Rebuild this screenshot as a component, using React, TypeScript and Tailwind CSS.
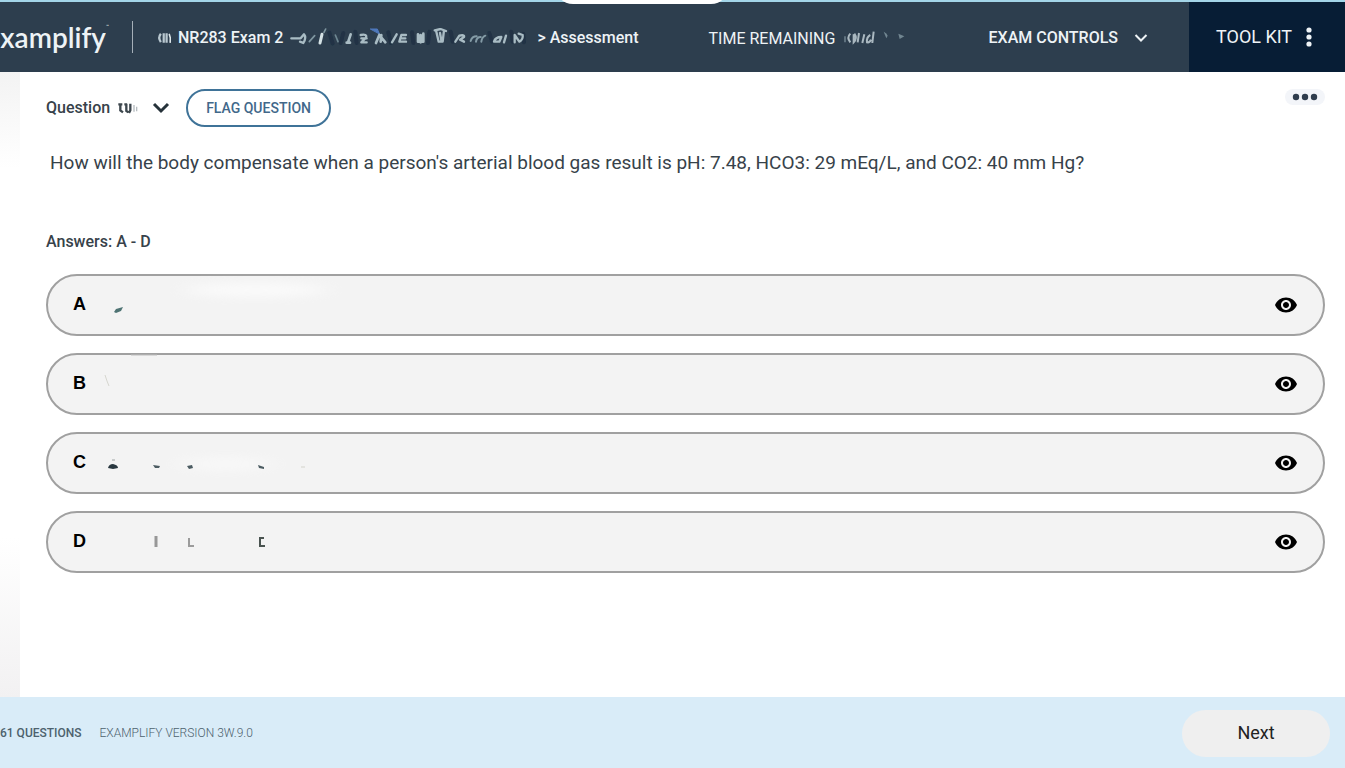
import React from "react";
import { MdVisibility } from "react-icons/md";

function ExamNameSmudge() {
  return (
    <svg
      viewBox="30 81 708 60"
      className="h-5 w-[236px] shrink-0"
      fill="none"
      stroke="#a9bcc4"
      strokeWidth="7"
      strokeLinecap="round"
      strokeLinejoin="round"
      aria-hidden="true"
    >
      <defs>
        <filter id="soften" x="-5%" y="-20%" width="110%" height="140%">
          <feGaussianBlur stdDeviation="1.500" />
        </filter>
      </defs>
      <g filter="url(#soften)">
        <g stroke="#203345" strokeWidth="12">
          <path d="M148 95l10 32M190 96l-8 30M226 92l4 34M325 94l8 32M396 94l4 32M448 92l-4 34M512 92l6 30M628 96l8 26M694 92l4 30M730 98l2 26" />
        </g>
        <path d="M34 112h28l10-12q8 10-2 26l-10-4" />
        <path d="M104 104l-16 18M137 84l-5 10" strokeWidth="5" stroke="#7f96a0" />
        <path d="M126 100l-6 26" stroke="#d5e2e5" strokeWidth="9" />
        <path d="M166 102l8 20" stroke="#6e8792" strokeWidth="5" />
        <path d="M212 100l-8 24M200 125h10" strokeWidth="8" />
        <path d="M242 102q20-4 16 8l-14 14h16M244 112h16" />
        <path d="M272 84l20 0 6 14z" fill="#4f79bd" stroke="#4f79bd" strokeWidth="3" />
        <path d="M288 126l10-24 18 22M304 102l-2 20" strokeWidth="8" />
        <path d="M350 100l-14 24M378 102h-14l-6 20h20M362 112h14" />
        <path d="M414 100v22h16V98M422 102v22" strokeWidth="8" />
        <path d="M468 88l8 34 12 0 4-34M464 88l18-4 16 6M480 96l4 22" strokeWidth="7" />
        <path d="M526 122l12-18q16-4 14 4l-12 8 12 6" />
        <path d="M572 120q4-14 18-14M588 122q2-14 14-14M604 122q2-14 12-18" stroke="#849ba6" strokeWidth="6" />
        <path d="M642 122q4-14 22-14l-6 14h-14M678 104l-6 20" />
        <path d="M704 124v-22l14 20q12-6 10-20l-12-4" />
      </g>
    </svg>
  );
}

function TimeSmudge() {
  return (
    <svg
      viewBox="912 90 192 60"
      className="h-5 w-16 shrink-0"
      fill="none"
      stroke="#aab8c0"
      strokeWidth="6"
      aria-hidden="true"
    >
      <g filter="url(#soften)">
        <path d="M918 112v18" stroke="#5f727f" />
        <path d="M934 104q-12 12 0 26M944 106v24q12-12 2-26M960 102l-4 28" />
        <path d="M976 106l-6 26M994 108q-12 6-10 22 8 2 12-8M1004 98l-4 34" />
        <path d="M1034 98q10 4 12 12l-4 8zM1078 104l18 8-14 8z" fill="#718691" stroke="none" />
      </g>
    </svg>
  );
}

function QuestionSmudge() {
  return (
    <svg
      viewBox="355 300 66 48"
      className="h-4 w-[22px] shrink-0"
      fill="none"
      stroke="#3d474e"
      strokeWidth="7"
      aria-hidden="true"
    >
      <g filter="url(#soften)">
        <path d="M362 311v20l8 6M356 313h12M380 311v22l6 4M392 311v20l-4 8M374 313h8" />
        <path d="M403 315v20M411 320v14" stroke="#b6bcc0" strokeWidth="4" />
      </g>
    </svg>
  );
}

const smudges: Record<string, React.ReactNode> = {
  A: (
    <>
      <ellipse cx="155" cy="-5" rx="70" ry="7" fill="#ffffff" opacity="0.6" filter="url(#glow)" />
      <path d="M13 17l2-3 7-2-2 4-5 2z" fill="#4e7373" />
    </>
  ),
  B: (
    <>
      <path d="M4 1l2 6 2 5" stroke="#d6d6cf" strokeWidth="1" fill="none" />
      <path d="M30 -19h26" stroke="#bdbdbd" strokeWidth="1" />
    </>
  ),
  C: (
    <>
      <ellipse cx="125" cy="11" rx="45" ry="7" fill="#ffffff" opacity="0.4" filter="url(#glow)" />
      <path d="M7 15q1-4 5-4 5 1 5 4l-5 1z" fill="#28373f" />
      <path d="M11 7h3" stroke="#c9cccc" strokeWidth="2" />
      <path d="M52 12l7 1-1 2-4 0zM86 13l5-1 1 3-4 1zM157 12l6 2v2l-5-1z" fill="#4c5c62" />
      <path d="M200 14h4" stroke="#e3e3df" strokeWidth="2" />
    </>
  ),
  D: (
    <>
      <path d="M55 4v11" stroke="#979797" strokeWidth="3" />
      <path d="M88 6v8h5" stroke="#9b9b9b" strokeWidth="2" fill="none" />
      <path d="M163 6h-4v8h5" stroke="#495350" strokeWidth="2" fill="none" />
    </>
  ),
};

function Answer({ letter }: { letter: string }) {
  return (
    <li className="flex h-[62px] items-center rounded-full border-2 border-[#a0a0a0] bg-[#f3f3f3] pr-[25px]">
      <button
        type="button"
        className="flex h-full flex-1 items-center rounded-full pl-[25px] text-left font-['Liberation_Sans',sans-serif] text-lg font-bold text-black"
      >
        <span className="w-7 pb-0.5">{letter}</span>
        <svg viewBox="0 0 240 20" className="h-5 w-60 overflow-visible" aria-hidden="true">
          <defs>
            <filter id="glow" x="-30%" y="-100%" width="160%" height="300%">
              <feGaussianBlur stdDeviation="12 5" />
            </filter>
          </defs>
          {smudges[letter]}
        </svg>
      </button>
      <button type="button" aria-label={`Hide answer ${letter}`} className="text-black">
        <MdVisibility className="size-6" />
      </button>
    </li>
  );
}

export default function App() {
  return (
    <div className="flex min-h-screen flex-col overflow-x-hidden bg-white font-[Roboto,sans-serif] text-[#37424a]">
      <header className="relative flex h-[72px] items-center border-t-2 border-[#a3d5e8] bg-[#2d3e4e] text-[#eef3f6]">
        <div className="absolute -top-4 left-1/2 h-[18px] w-[174px] -translate-x-[118px] rounded-b-[20px] bg-white" />
        <div className="flex w-[106px] shrink-0 justify-end overflow-hidden font-[Lato,sans-serif] text-[28px] font-semibold leading-9">
          Examplify
        </div>
        <span className="w-[26px] shrink-0 self-start pt-4 text-[5px] leading-4">™</span>
        <div className="h-8 w-px shrink-0 bg-[#a5afb8]" />
        <div className="ml-6 flex shrink-0 items-center gap-[5px] pt-0.5 text-base font-medium">
          <svg viewBox="470 90 50 42" className="h-3.5 w-4" fill="none" stroke="#b9c8d0" strokeWidth="7" aria-hidden="true">
            <g filter="url(#soften)">
              <path d="M482 98q-10 12 0 26M491 96v30M500 96v30" />
              <path d="M508 98q6 12 3 28" stroke="#dce5e9" strokeWidth="5" />
            </g>
          </svg>
          <span className="pr-0.5">NR283 Exam 2</span>
          <ExamNameSmudge />
          <span className="pl-1.5">&gt; Assessment</span>
        </div>
        <div className="ml-[70px] flex shrink-0 items-center gap-2 pt-1 text-base">
          <span>TIME REMAINING</span>
          <TimeSmudge />
        </div>
        <button type="button" className="ml-auto mr-[41px] flex shrink-0 items-center gap-4 pt-0.5 text-base font-medium">
          EXAM CONTROLS
          <svg viewBox="0 0 14 10" className="h-2.5 w-3.5" fill="none" stroke="currentColor" strokeWidth="2" aria-hidden="true">
            <path d="M1.500 2l5.500 5.500L12.500 2" />
          </svg>
        </button>
        <button
          type="button"
          className="flex h-full w-[156px] shrink-0 items-center gap-3.5 bg-[#071d35] pl-[27px] text-lg"
        >
          TOOL KIT
          <svg viewBox="0 0 6 20" className="h-5 w-1.5" fill="currentColor" aria-hidden="true">
            <circle cx="3" cy="3" r="2.600" />
            <circle cx="3" cy="10" r="2.600" />
            <circle cx="3" cy="17" r="2.600" />
          </svg>
        </button>
      </header>

      <div className="flex flex-1">
        <aside className="flex w-5 shrink-0 flex-col justify-between">
          <div className="h-24 bg-linear-to-b from-[#f3f3f3] to-white" />
          <div className="h-40 bg-linear-to-b from-white to-[#f2f1f2]" />
        </aside>
        <main className="flex-1 pb-8 pl-[26px] pr-5 pt-[17px]">
          <div className="flex items-start justify-between">
            <div className="flex items-center">
              <button type="button" className="flex items-center text-base font-medium">
                <span className="pr-2">Question</span>
                <QuestionSmudge />
                <svg viewBox="0 0 18 12" className="ml-3 h-3 w-[18px]" fill="none" stroke="#26323a" strokeWidth="3" aria-hidden="true">
                  <path d="M2 2l7 7 7-7" />
                </svg>
              </button>
              <button
                type="button"
                className="ml-4 h-[38px] rounded-full border-2 border-[#3f7398] px-[18px] text-sm font-medium text-[#42688a]"
              >
                FLAG QUESTION
              </button>
            </div>
            <button type="button" aria-label="More options" className="flex h-4 w-10 items-center justify-center rounded-full bg-[#f3f5f9]">
              <svg viewBox="0 0 26 8" className="h-2 w-[26px]" fill="#2f3d4d" aria-hidden="true">
                <circle cx="4" cy="4" r="3.200" />
                <circle cx="13" cy="4" r="3.200" />
                <circle cx="22" cy="4" r="3.200" />
              </svg>
            </button>
          </div>
          <p className="pl-1 pt-[22px] text-[19px] leading-7">
            How will the body compensate when a person&apos;s arterial blood gas result is pH: 7.48, HCO3: 29 mEq/L, and CO2: 40 mm Hg?
          </p>
          <h2 className="pt-[53px] text-base font-medium leading-6">Answers: A - D</h2>
          <ul className="flex flex-col gap-[17px] pt-5">
            {["A", "B", "C", "D"].map((letter) => (
              <Answer key={letter} letter={letter} />
            ))}
          </ul>
        </main>
      </div>

      <footer className="flex h-[71px] items-center bg-[#d9ecf8] pr-[15px] pt-px text-xs text-[#4d626e]">
        <span className="font-medium">61 QUESTIONS</span>
        <span className="pl-[18px] font-light">EXAMPLIFY VERSION 3W.9.0</span>
        <button type="button" className="ml-auto h-[47px] w-[148px] rounded-full bg-[#efefef] text-lg text-[#222222]">
          Next
        </button>
      </footer>
    </div>
  );
}
